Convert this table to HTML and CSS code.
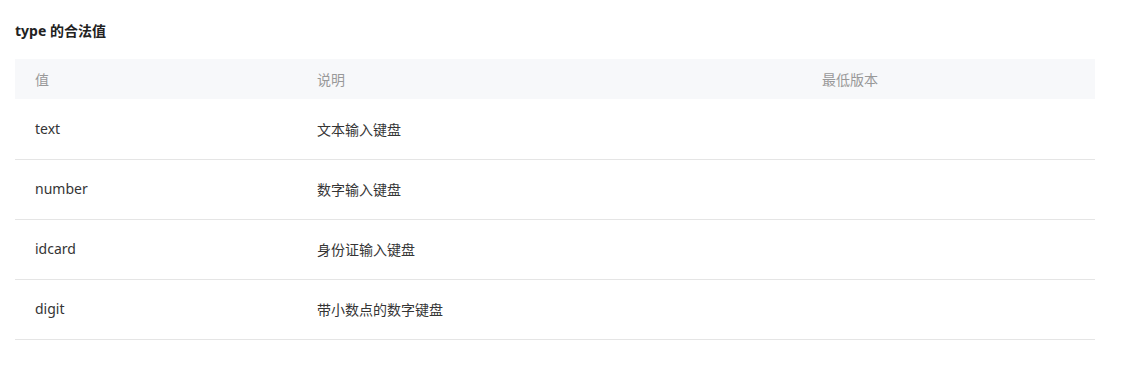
FILE: index.html
```html
<!DOCTYPE html>
<html lang="zh">
<head>
<meta charset="utf-8">
<link rel="stylesheet" href="styles.css">
</head>
<body>
<div class="page">
  <h4 class="title">type 的合法值</h4>
  <table class="tbl">
    <colgroup><col class="c1"><col class="c2"><col class="c3"></colgroup>
    <thead>
      <tr><th>值</th><th>说明</th><th>最低版本</th></tr>
    </thead>
    <tbody>
      <tr><td>text</td><td class="zh">文本输入键盘</td><td></td></tr>
      <tr><td>number</td><td class="zh">数字输入键盘</td><td></td></tr>
      <tr><td>idcard</td><td class="zh">身份证输入键盘</td><td></td></tr>
      <tr><td>digit</td><td class="zh">带小数点的数字键盘</td><td></td></tr>
    </tbody>
  </table>
</div>
</body>
</html>
```
FILE: styles.css
```css
html, body { margin: 0; padding: 0; background: #fff; }
body {
  font-family: "Noto Sans", "Noto Sans CJK SC", sans-serif;
  color: #333;
}
.page { padding: 20px 51px 0 15px; }
.title {
  margin: 0 0 17px 0;
  font-size: 14px;
  line-height: 22px;
  font-weight: 700;
  color: #222;
}
.tbl {
  width: 1080px;
  border-collapse: collapse;
  table-layout: fixed;
}
.c1 { width: 282px; }
.c2 { width: 505px; }
.c3 { width: 293px; }
.tbl th {
  height: 39px;
  padding: 0 20px 1px 20px;
  background: #f7f8fa;
  border-bottom: 1px solid #fff;
  color: #999;
  font-weight: 400;
  font-size: 14px;
  text-align: left;
}
.tbl td {
  height: 57px;
  padding: 0 20px 2px 20px;
  border-bottom: 1px solid #e5e5e5;
  font-size: 14px;
  color: #353535;
}
.tbl td.zh { font-size: 14px; }
```
